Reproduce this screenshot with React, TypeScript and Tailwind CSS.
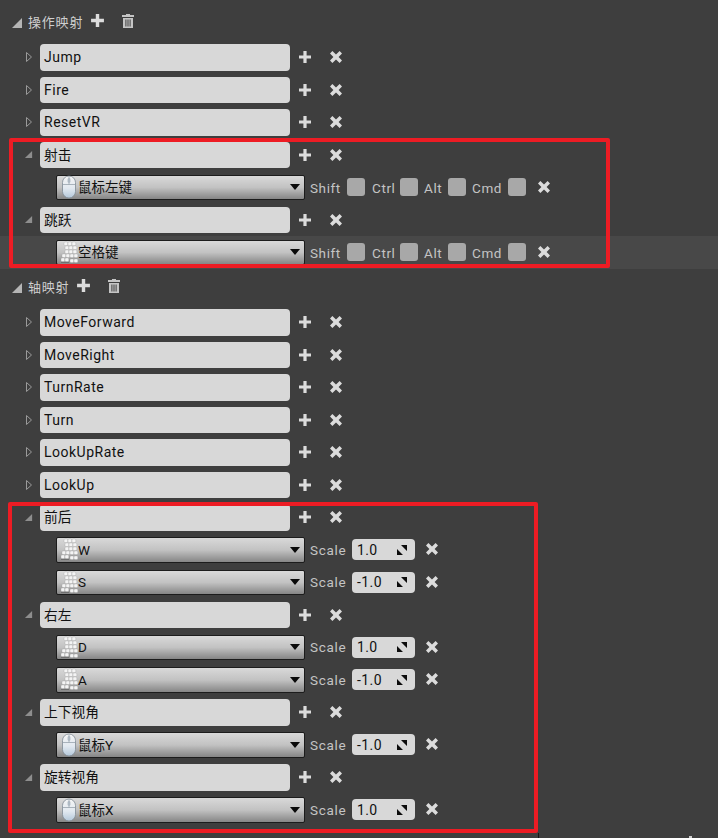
import * as React from "react"

const sans = "font-['Roboto','Noto_Sans_CJK_SC',sans-serif]"

function PlusIcon({ className }: { className?: string }) {
  return (
    <svg viewBox="0 0 14 14" className={className}>
      <path d="M5.4 1h3.2v4.4H13v3.2H8.6V13H5.4V8.6H1V5.4h4.4z" fill="#dcdcdc" />
    </svg>
  )
}

function CloseIcon() {
  return (
    <svg viewBox="0 0 14 14" className="w-[14px] h-[14px]">
      <path d="M3.4 1 7 4.4 10.6 1 13 3.4 9.6 7 13 10.6 10.6 13 7 9.6 3.4 13 1 10.6 4.4 7 1 3.4z" fill="#dcdcdc" />
    </svg>
  )
}

function TrashIcon() {
  return (
    <svg viewBox="0 0 14 16" className="w-[14px] h-[16px]">
      <path d="M5 1h4v1h4v2H1V2h4zM2 5h10v10H2z" fill="#c4c4c4" />
      <path d="M4.4 6.5h1v7h-1zM6.5 6.5h1v7h-1zM8.6 6.5h1v7h-1z" fill="#3e3e3e" />
    </svg>
  )
}

function MouseIcon() {
  return (
    <svg viewBox="0 0 16 24" className="w-[16px] h-[24px] shrink-0">
      <defs>
        <linearGradient id="mouseBody" x1="0" y1="0" x2="0" y2="1">
          <stop offset="0" stopColor="#f4f4f4" />
          <stop offset="0.55" stopColor="#e2e9f0" />
          <stop offset="1" stopColor="#b4c8da" />
        </linearGradient>
      </defs>
      <rect x="1.5" y="1" width="13" height="22" rx="6.5" fill="url(#mouseBody)" stroke="#7f8a94" strokeWidth="0.8" />
      <path d="M2 9.5h12" stroke="#98a3ad" strokeWidth="0.8" />
      <path d="M8 1.5v8" stroke="#98a3ad" strokeWidth="0.8" />
      <rect x="6.6" y="3" width="2.8" height="5" rx="1.4" fill="#aeb9c3" />
    </svg>
  )
}

// staircase of blurry keys, same layout as the UE keyboard glyph
const keyDots = [
  [4, 1], [8, 1], [12, 1],
  [5, 5], [9, 5], [13, 5],
  [5, 9], [9, 9], [13, 9],
  [2, 13], [6, 13], [10, 13], [14, 13],
  [1, 17], [5, 17], [10, 18], [14, 18],
]

function KeyboardIcon() {
  return (
    <svg viewBox="0 0 19 23" className="w-[19px] h-[23px] shrink-0">
      {keyDots.map(([x, y]) => (
        <rect key={`${x}-${y}`} x={x} y={y} width="3.8" height="3.6" rx="1" fill="#f4f4f4" stroke="#9a9a9a" strokeWidth="0.3" />
      ))}
      <path d="M1 21.5h8" stroke="#6f6f6f" strokeWidth="1" />
    </svg>
  )
}

function Caret({ open }: { open: boolean }) {
  if (open) {
    return (
      <svg viewBox="0 0 10 10" className="w-[9px] h-[9px]">
        <path d="M9 1v8H1z" fill="#8e8e8e" />
      </svg>
    )
  }
  return (
    <svg viewBox="0 0 8 12" className="w-[8px] h-[12px]">
      <path d="M1.5 1.5 6.5 6l-5 4.5z" fill="none" stroke="#9a9a9a" strokeWidth="1" />
    </svg>
  )
}

function SpinIcon() {
  return (
    <svg viewBox="0 0 12 12" className="w-[12px] h-[12px] -mt-[1px]">
      <path d="M5 1h6v6zM1 5l6 6H1z" fill="#0c0c0c" />
    </svg>
  )
}

function SectionHeader({ title, titleWidth }: { title: string; titleWidth: string }) {
  return (
    <div className="flex h-[28px] mb-[5px] items-center pl-[12px]">
      <svg viewBox="0 0 10 10" className="w-[10px] h-[10px] mt-[1px]">
        <path d="M10 0v10H0z" fill="#b5b5b5" />
      </svg>
      <span className={`ml-[6px] mt-[1px] text-[13px] tracking-[0.8px] text-[#cfcfcf] ${titleWidth} ${sans}`}>{title}</span>
      <PlusIcon className="w-[15px] h-[15px] mb-[3px]" />
      <span className="ml-[16px] mb-[3px] flex">
        <TrashIcon />
      </span>
    </div>
  )
}

function NameRow({ name, open }: { name: string; open?: boolean }) {
  const isCjk = /[^\x00-\x7f]/.test(name)
  return (
    <div className="flex h-[32.5px] items-center py-[3px]">
      <span className="w-[40px] flex justify-end pr-[7px]">
        <Caret open={!!open} />
      </span>
      <div
        className={`w-[250px] h-full rounded-[4px] bg-[#d8d8d8] pl-[4px] pt-[0.6px] flex items-center text-[#111] ${sans} ${
          isCjk ? "text-[13.75px]" : "text-[14px] tracking-[0.5px]"
        }`}
      >
        {name}
      </div>
      <span className="ml-[8px] flex w-[14px]">
        <PlusIcon className="w-[14px] h-[14px] shrink-0" />
      </span>
      <span className="ml-[17px] flex">
        <CloseIcon />
      </span>
    </div>
  )
}

function KeySelect({ label, device }: { label: string; device: "mouse" | "key" }) {
  return (
    <div className={`w-[249px] h-[25.5px] ml-[56px] shrink-0 flex items-center rounded-[2px] border border-[#1c1c1c] bg-gradient-to-b from-[#d9d9d9] via-[#c2c2c2] to-[#868686] pl-[3px] pr-[4px] text-[13.5px] text-[#111] ${sans}`}>
      <span className="w-[18px] flex justify-center shrink-0">{device === "mouse" ? <MouseIcon /> : <KeyboardIcon />}</span>
      <span className="flex-1 pt-[0.5px]">{label}</span>
      <svg viewBox="0 0 10 6" className="w-[10px] h-[6px]">
        <path d="M0 0h10L5 6z" fill="#0a0a0a" />
      </svg>
    </div>
  )
}

function Modifier({ label, width }: { label: string; width: string }) {
  return (
    <>
      <span className={`${width} pt-[1px] text-[13.5px] tracking-[0.6px] text-[#c4c4c4] ${sans}`}>{label}</span>
      <span className="w-[18px] h-[18px] rounded-[3px] bg-[#a8a8a8] mr-[6px]" />
    </>
  )
}

function ActionBinding({ label, device, hover }: { label: string; device: "mouse" | "key"; hover?: boolean }) {
  return (
    <div className={`flex h-[32.5px] items-center py-[3px] ${hover ? "bg-[#484848]" : ""}`}>
      <KeySelect label={label} device={device} />
      <div className="ml-[5px] flex items-center">
        <Modifier label="Shift" width="w-[37px]" />
        <Modifier label="Ctrl" width="w-[29px] pl-[1px]" />
        <Modifier label="Alt" width="w-[24px]" />
        <Modifier label="Cmd" width="w-[36px]" />
      </div>
      <span className="ml-[5px] mb-[1px] flex">
        <CloseIcon />
      </span>
    </div>
  )
}

function AxisBinding({ label, device, scale }: { label: string; device: "mouse" | "key"; scale: string }) {
  return (
    <div className="flex h-[32.5px] items-center py-[3px]">
      <KeySelect label={label} device={device} />
      <span className={`ml-[5px] w-[42px] pt-[0.6px] text-[13.5px] tracking-[0.7px] text-[#c4c4c4] ${sans}`}>Scale</span>
      <div className={`w-[63px] h-[21px] rounded-[4px] bg-[#d8d8d8] pl-[5px] pr-[7px] pt-[1px] flex items-center justify-between text-[14px] tracking-[0.4px] text-[#111] ${sans}`}>
        {scale}
        <SpinIcon />
      </div>
      <span className="ml-[10px] mb-[1px] flex">
        <CloseIcon />
      </span>
    </div>
  )
}

export default function App() {
  return (
    <div className="relative w-[718px] h-[838px] overflow-hidden bg-[#3e3e3e] pt-[8px]">
      <SectionHeader title="操作映射" titleWidth="w-[62px]" />
      <NameRow name="Jump" />
      <NameRow name="Fire" />
      <NameRow name="ResetVR" />
      <NameRow name="射击" open />
      <ActionBinding label="鼠标左键" device="mouse" />
      <NameRow name="跳跃" open />
      <ActionBinding label="空格键" device="key" hover />

      <div className="mt-[4.5px]">
        <SectionHeader title="轴映射" titleWidth="w-[48px]" />
      </div>
      <NameRow name="MoveForward" />
      <NameRow name="MoveRight" />
      <NameRow name="TurnRate" />
      <NameRow name="Turn" />
      <NameRow name="LookUpRate" />
      <NameRow name="LookUp" />
      <NameRow name="前后" open />
      <AxisBinding label="W" device="key" scale="1.0" />
      <AxisBinding label="S" device="key" scale="-1.0" />
      <NameRow name="右左" open />
      <AxisBinding label="D" device="key" scale="1.0" />
      <AxisBinding label="A" device="key" scale="-1.0" />
      <NameRow name="上下视角" open />
      <AxisBinding label="鼠标Y" device="mouse" scale="-1.0" />
      <NameRow name="旋转视角" open />
      <AxisBinding label="鼠标X" device="mouse" scale="1.0" />

      {/* red annotation boxes drawn over the screenshot */}
      <div className="absolute left-[9px] top-[138px] w-[601px] h-[130px] rounded-[2px] border-[4px] border-[#ed1c24]" />
      <div className="absolute left-[8px] top-[502px] w-[530px] h-[331px] rounded-[2px] border-[4px] border-[#ed1c24]" />
      {/* crop edge leftovers at the bottom of the shot */}
      <div className="absolute left-[538px] top-[833px] w-px h-[5px] bg-[#161616]" />
      <div className="absolute left-[689px] top-[836px] w-[3px] h-[2px] bg-[#cfcfcf]" />
    </div>
  )
}
